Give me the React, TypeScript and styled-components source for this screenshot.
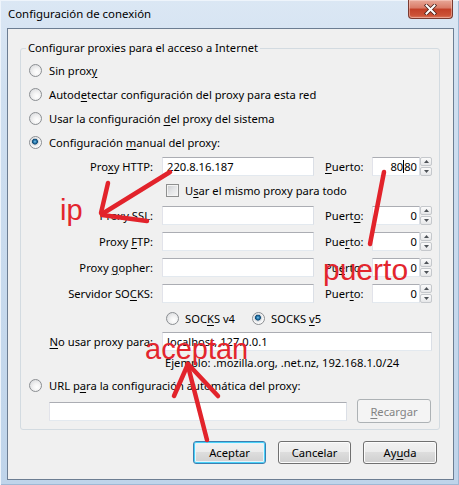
import React from "react";
import styled, { createGlobalStyle, css } from "styled-components";

const FONT = `"Noto Sans", "Open Sans", sans-serif`;

const GlobalStyle = createGlobalStyle`
  html, body { margin: 0; padding: 0; }
  body { background: #c9dbee; font-family: ${FONT}; }
  #root { width: 459px; height: 485px; }
`;

const Window = styled.div`
  position: relative;
  width: 459px;
  height: 485px;
  box-sizing: border-box;
  display: flex;
  flex-direction: column;
  padding: 0 5px 5px 7px;
  background: linear-gradient(to bottom, #dbe7f4 0%, #cfdff0 20%, #bfd4ea 100%);
  box-shadow: inset 1px 1px 0 #eef4fb, inset -1px -1px 0 #9fb8d4;
  overflow: hidden;
  font-family: ${FONT};
  font-size: 11.2px;
  color: #000;
`;

const TitleBar = styled.div`
  height: 28px;
  flex: none;
  display: flex;
  align-items: flex-start;
  justify-content: space-between;
`;

const Title = styled.div`
  line-height: 28px;
  padding-left: 1px;
  font-size: 11.4px;
  color: #000;
`;

const CloseButton = styled.div`
  width: 45px;
  height: 19px;
  margin-right: 1px;
  box-sizing: border-box;
  border: 1px solid #7a3a30;
  border-top: none;
  border-radius: 0 0 4px 4px;
  background: linear-gradient(to bottom, #e8a898 0%, #d97a66 45%, #c23f27 50%, #cc5236 85%, #dc7a60 100%);
  box-shadow: inset 0 0 0 1px rgba(255, 220, 210, 0.45);
  display: flex;
  align-items: center;
  justify-content: center;
`;

const Client = styled.div`
  flex: 1;
  display: flex;
  flex-direction: column;
  background: #f0f0f0;
  border: 1px solid #6c7d92;
  padding: 11px 13px 0 12px;
`;

const Group = styled.fieldset`
  margin: 0;
  padding: 2px 6px 5px 8px;
  border: 1px solid #d3dbe1;
  border-radius: 3px;
  min-width: 0;
`;

const Legend = styled.legend`
  padding: 0 2px;
  margin-left: -3px;
  line-height: 16px;
`;

const OptionRow = styled.div<{ $h?: number }>`
  height: ${(p) => p.$h ?? 24}px;
  display: flex;
  align-items: center;
  gap: 7px;
  white-space: nowrap;
`;

const Radio = styled.span<{ $checked?: boolean }>`
  flex: none;
  width: 13px;
  height: 13px;
  box-sizing: border-box;
  border-radius: 50%;
  border: 1px solid #8b8e92;
  background: radial-gradient(circle at 62% 65%, #ffffff 0%, #f4f4f4 35%, #d2d4d7 100%);
  ${(p) =>
    p.$checked &&
    css`
      background: radial-gradient(circle at 45% 42%, #7cc8ef 0, #2a79ad 1.4px, #0e4a76 2.6px, #c7cbcf 3.2px, #eceef0 4.2px, #fbfbfb 6px);
    `}
`;

const Key = styled.span`
  text-decoration: underline;
  text-underline-offset: 2px;
`;

const FieldRow = styled.div<{ $h: number }>`
  height: ${(p) => p.$h}px;
  display: flex;
  align-items: center;
  white-space: nowrap;
`;

const FieldLabel = styled.div`
  width: 125px;
  padding-right: 1px;
  box-sizing: border-box;
  text-align: right;
  flex: none;
`;

const TextBox = styled.div<{ $w: number; $ml?: number }>`
  flex: none;
  width: ${(p) => p.$w}px;
  height: 19px;
  margin-left: ${(p) => p.$ml ?? 8}px;
  box-sizing: border-box;
  background: #fff;
  border: 1px solid;
  border-color: #abadb3 #dbdfe6 #e3e9ef #e2e3ea;
  padding: 0 4px;
  line-height: 17px;
  overflow: hidden;
  white-space: nowrap;
`;

const PortLabel = styled.div`
  width: 47px;
  margin-left: 11px;
  flex: none;
`;

const PortField = styled.div`
  display: flex;
  flex: none;
  height: 19px;
`;

const PortBox = styled.div`
  width: 48px;
  box-sizing: border-box;
  background: #fff;
  border: 1px solid;
  border-color: #abadb3 #dbdfe6 #e3e9ef #e2e3ea;
  padding-right: 2px;
  line-height: 17px;
  display: flex;
  justify-content: flex-end;
  align-items: center;
`;

const Caret = styled.span`
  display: inline-block;
  width: 1px;
  height: 13px;
  background: #000;
`;

const Spinner = styled.div`
  width: 12px;
  display: flex;
  flex-direction: column;
  gap: 1px;
`;

const SpinBtn = styled.div`
  flex: 1;
  box-sizing: border-box;
  border: 1px solid #c5c8cc;
  border-radius: 2px;
  background: linear-gradient(to bottom, #fbfbfb, #e6e7e9);
  display: flex;
  align-items: center;
  justify-content: center;
`;

const CheckRow = styled.div`
  height: 24px;
  display: flex;
  align-items: center;
  gap: 6px;
  padding-left: 137px;
  white-space: nowrap;
`;

const Checkbox = styled.span`
  flex: none;
  width: 13px;
  height: 13px;
  box-sizing: border-box;
  border: 1px solid #8e8f8f;
  background: linear-gradient(135deg, #c8cbce 0%, #e4e5e7 50%, #f6f6f6 100%);
  box-shadow: inset 0 0 0 1px #f3f3f3;
`;

const VersionRow = styled.div`
  height: 24px;
  display: flex;
  align-items: center;
  padding-left: 137px;
  white-space: nowrap;
`;

const VersionOption = styled.div<{ $ml?: number }>`
  display: flex;
  align-items: center;
  gap: 6px;
  margin-left: ${(p) => p.$ml ?? 0}px;
`;

const Hint = styled.div`
  height: 19px;
  display: flex;
  align-items: center;
  padding-left: 136px;
  white-space: nowrap;
`;

const UrlRow = styled.div`
  height: 26px;
  display: flex;
  align-items: center;
  padding-left: 20px;
`;

const Button = styled.div<{ $default?: boolean; $disabled?: boolean; $w?: number; $h?: number; $ml?: number }>`
  flex: none;
  width: ${(p) => p.$w ?? 73}px;
  height: ${(p) => p.$h ?? 23}px;
  margin-left: ${(p) => p.$ml ?? 0}px;
  box-sizing: border-box;
  border: 1px solid #707070;
  border-radius: 3px;
  background: linear-gradient(to bottom, #f2f2f2 0%, #ebebeb 49%, #dddddd 50%, #cfcfcf 100%);
  box-shadow: inset 0 0 0 1px #fcfcfc;
  display: flex;
  align-items: center;
  justify-content: center;
  ${(p) =>
    p.$default &&
    css`
      border-color: #3c7fb1;
      box-shadow: inset 0 0 0 1px #48d1f7, inset 0 0 0 2px #e5f4fc;
    `}
  ${(p) =>
    p.$disabled &&
    css`
      border-color: #adb2b5;
      background: #f4f4f4;
      box-shadow: none;
      color: #838383;
    `}
`;

const ButtonRow = styled.div`
  display: flex;
  justify-content: flex-end;
  gap: 12px;
  margin-top: 11px;
  padding-right: 3px;
`;

const Overlay = styled.svg`
  position: absolute;
  left: 0;
  top: 0;
  pointer-events: none;
`;

const AnnoText = styled.text`
  font-family: "Liberation Sans", Arial, sans-serif;
  fill: #e3252d;
`;

const UpTri = () => (
  <svg width="5" height="3" viewBox="0 0 5 3">
    <path d="M0 3 L2.5 0 L5 3 Z" fill="#4d5257" />
  </svg>
);
const DownTri = () => (
  <svg width="5" height="3" viewBox="0 0 5 3">
    <path d="M0 0 L2.5 3 L5 0 Z" fill="#4d5257" />
  </svg>
);

const Port: React.FC<{ children: React.ReactNode }> = ({ children }) => (
  <PortField>
    <PortBox>{children}</PortBox>
    <Spinner>
      <SpinBtn>
        <UpTri />
      </SpinBtn>
      <SpinBtn>
        <DownTri />
      </SpinBtn>
    </Spinner>
  </PortField>
);

export default function App() {
  return (
    <>
      <GlobalStyle />
      <Window>
        <TitleBar>
          <Title>Configuración de conexión</Title>
          <CloseButton>
            <svg width="13" height="11" viewBox="0 0 13 11">
              <path d="M2.5 1.5 L10.5 9.5 M10.5 1.5 L2.5 9.5" stroke="#4a2019" strokeWidth="3.6" strokeLinecap="square" />
              <path d="M2.5 1.5 L10.5 9.5 M10.5 1.5 L2.5 9.5" stroke="#ffffff" strokeWidth="2" strokeLinecap="square" />
            </svg>
          </CloseButton>
        </TitleBar>
        <Client>
          <Group>
            <Legend>Configurar proxies para el acceso a Internet</Legend>
            <OptionRow>
              <Radio />
              <span>
                Sin prox<Key>y</Key>
              </span>
            </OptionRow>
            <OptionRow>
              <Radio />
              <span>
                Autod<Key>e</Key>tectar configuración del proxy para esta red
              </span>
            </OptionRow>
            <OptionRow>
              <Radio />
              <span>
                Usar la configuración <Key>d</Key>el proxy del sistema
              </span>
            </OptionRow>
            <OptionRow>
              <Radio $checked />
              <span>
                Configuración <Key>m</Key>anual del proxy:
              </span>
            </OptionRow>

            <FieldRow $h={24}>
              <FieldLabel>
                Pro<Key>x</Key>y HTTP:
              </FieldLabel>
              <TextBox $w={152}>220.8.16.187</TextBox>
              <PortLabel>
                <Key>P</Key>uerto:
              </PortLabel>
              <Port>
                80
                <Caret />
                80
              </Port>
            </FieldRow>
            <CheckRow>
              <Checkbox />
              <span>
                U<Key>s</Key>ar el mismo proxy para todo
              </span>
            </CheckRow>
            <FieldRow $h={26}>
              <FieldLabel>Proxy SSL:</FieldLabel>
              <TextBox $w={152} />
              <PortLabel>
                Puert<Key>o</Key>:
              </PortLabel>
              <Port>0</Port>
            </FieldRow>
            <FieldRow $h={26}>
              <FieldLabel>
                Proxy <Key>F</Key>TP:
              </FieldLabel>
              <TextBox $w={152} />
              <PortLabel>
                Pue<Key>r</Key>to:
              </PortLabel>
              <Port>0</Port>
            </FieldRow>
            <FieldRow $h={26}>
              <FieldLabel>
                Proxy <Key>g</Key>opher:
              </FieldLabel>
              <TextBox $w={152} />
              <PortLabel>
                Pu<Key>e</Key>rto:
              </PortLabel>
              <Port>0</Port>
            </FieldRow>
            <FieldRow $h={26}>
              <FieldLabel>
                Servidor SO<Key>C</Key>KS:
              </FieldLabel>
              <TextBox $w={152} />
              <PortLabel>
                Puer<Key>t</Key>o:
              </PortLabel>
              <Port>0</Port>
            </FieldRow>
            <VersionRow>
              <VersionOption>
                <Radio />
                <span>
                  SOC<Key>K</Key>S v4
                </span>
              </VersionOption>
              <VersionOption $ml={17}>
                <Radio $checked />
                <span>
                  SOCKS <Key>v</Key>5
                </span>
              </VersionOption>
            </VersionRow>
            <FieldRow $h={23}>
              <FieldLabel>
                <Key>N</Key>o usar proxy para:
              </FieldLabel>
              <TextBox $w={270}>localhost, 127.0.0.1</TextBox>
            </FieldRow>
            <Hint>Ejemplo: .mozilla.org, .net.nz, 192.168.1.0/24</Hint>
            <OptionRow $h={26}>
              <Radio />
              <span>
                URL p<Key>a</Key>ra la configuración automática del proxy:
              </span>
            </OptionRow>
            <UrlRow>
              <TextBox $w={298} $ml={0} />
              <Button $disabled $w={74} $h={24} $ml={10}>
                <span>
                  <Key>R</Key>ecargar
                </span>
              </Button>
            </UrlRow>
          </Group>
          <ButtonRow>
            <Button $default>Aceptar</Button>
            <Button>Cancelar</Button>
            <Button $w={74}>
              <span>
                Ay<Key>u</Key>da
              </span>
            </Button>
          </ButtonRow>
        </Client>
        <Overlay width={459} height={485} viewBox="0 0 459 485">
          <g stroke="#e2232b" strokeWidth={4.5} strokeLinecap="round" fill="none">
            <path d="M170 172 L102 214" />
            <path d="M108 183 L101 213" />
            <path d="M102 215 L147 221" />
            <path d="M384 172 L370 244" />
            <path d="M207 440 L188 366" />
            <path d="M188 364 L174 396" />
            <path d="M188 364 L218 396" />
          </g>
          <AnnoText x={60} y={220} fontSize={29}>
            ip
          </AnnoText>
          <AnnoText x={323} y={280} fontSize={30}>
            puerto
          </AnnoText>
          <AnnoText x={145} y={359} fontSize={29}>
            aceptan
          </AnnoText>
        </Overlay>
      </Window>
    </>
  );
}
